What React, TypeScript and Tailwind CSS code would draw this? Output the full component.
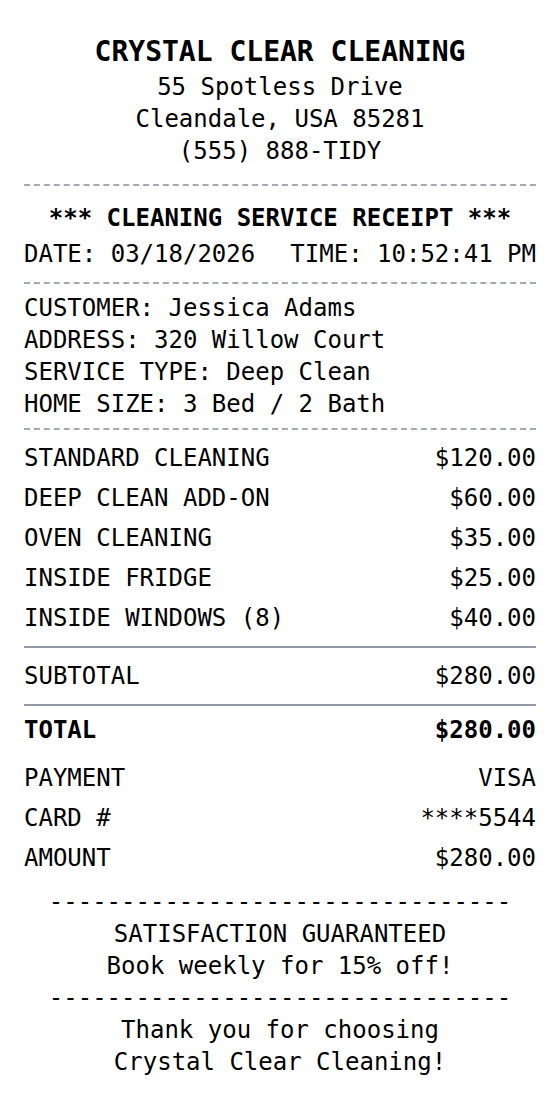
import React from 'react'

const items = [
    { label: 'STANDARD CLEANING', amount: '$120.00' },
    { label: 'DEEP CLEAN ADD-ON', amount: '$60.00' },
    { label: 'OVEN CLEANING', amount: '$35.00' },
    { label: 'INSIDE FRIDGE', amount: '$25.00' },
    { label: 'INSIDE WINDOWS (8)', amount: '$40.00' },
]

const payment = [
    { label: 'PAYMENT', value: 'VISA' },
    { label: 'CARD #', value: '****5544' },
    { label: 'AMOUNT', value: '$280.00' },
]

function Row({ label, value, bold }: { label: string; value: string; bold?: boolean }) {
    return (
        <div className={'flex justify-between py-1 leading-8 ' + (bold ? 'font-bold' : '')}>
            <span className='whitespace-pre'>{label}</span>
            <span className='whitespace-pre'>{value}</span>
        </div>
    )
}

export default function App() {
    return (
        <div className="min-h-[1118px] w-full bg-white text-black font-['DejaVu_Sans_Mono',monospace] text-[24px]">
            <div className='px-6 pt-[33px] pb-10'>

                <div className='text-center leading-8'>
                    <div className='text-[28px] font-bold leading-[38px]'>CRYSTAL CLEAR CLEANING</div>
                    <div>55 Spotless Drive</div>
                    <div>Cleandale, USA 85281</div>
                    <div>(555) 888-TIDY</div>
                </div>

                <div className='mt-[17px] border-t-2 border-dashed border-[#a3a9b5]' />

                <div className='mt-4 text-center font-bold leading-8'>*** CLEANING SERVICE RECEIPT ***</div>
                <div className='mt-1 flex justify-between leading-8'>
                    <span>DATE: 03/18/2026</span>
                    <span>TIME: 10:52:41 PM</span>
                </div>

                <div className='mt-3 border-t-2 border-dashed border-[#a3a9b5]' />

                <div className='py-2 leading-8'>
                    <div>CUSTOMER: Jessica Adams</div>
                    <div>ADDRESS: 320 Willow Court</div>
                    <div>SERVICE TYPE: Deep Clean</div>
                    <div>HOME SIZE: 3 Bed / 2 Bath</div>
                </div>

                <div className='border-t-2 border-dashed border-[#a3a9b5]' />

                <div className='pt-2'>
                    {items.map((it) => (
                        <Row key={it.label} label={it.label} value={it.amount} />
                    ))}
                </div>

                <div className='mt-2 border-t-2 border-[#9199a5]' />
                <div className='py-2'>
                    <Row label='SUBTOTAL' value='$280.00' />
                </div>
                <div className='border-t-2 border-[#9199a5]' />
                <div className='pt-1'>
                    <Row label='TOTAL' value='$280.00' bold />
                </div>

                <div className='mt-2'>
                    {payment.map((p) => (
                        <Row key={p.label} label={p.label} value={p.value} />
                    ))}
                </div>

                <div className='mt-2 text-center leading-8'>
                    <div>--------------------------------</div>
                    <div>SATISFACTION GUARANTEED</div>
                    <div>Book weekly for 15% off!</div>
                    <div>--------------------------------</div>
                    <div>Thank you for choosing</div>
                    <div>Crystal Clear Cleaning!</div>
                </div>

            </div>
        </div>
    )
}
